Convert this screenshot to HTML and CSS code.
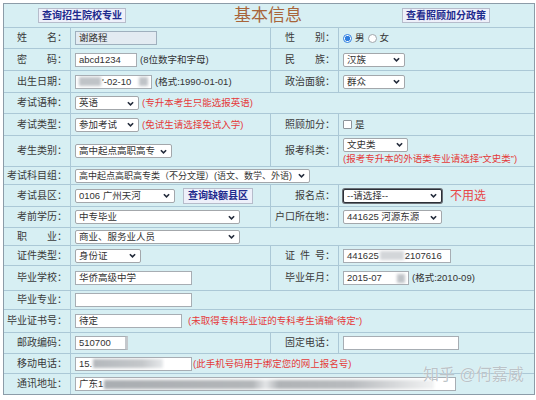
FILE: index.html
```html
<!DOCTYPE html>
<html lang="zh-CN">
<head>
<meta charset="utf-8">
<title>基本信息</title>
<link rel="stylesheet" href="styles.css">
</head>
<body>
<div class="page">
  <div class="form">
    <div class="head">
      <span class="btn">查询招生院校专业</span>
      <span class="title">基本信息</span>
      <span class="btn">查看照顾加分政策</span>
    </div>

    <div class="lab">姓　　名：</div>
    <div class="val"><span class="field ro w82">谢路程</span></div>
    <div class="lab">性　　别：</div>
    <div class="val"><span class="radio on"></span><span>男</span><span class="radio"></span><span>女</span></div>

    <div class="lab">密　　码：</div>
    <div class="val"><span class="field w62">abcd1234</span><span>(8位数字和字母)</span></div>
    <div class="lab">民　　族：</div>
    <div class="val"><span class="sel w62"><span class="t">汉族</span><svg class="chev" viewBox="0 0 8 5"><polyline points="1,1 4,4 7,1"/></svg></span></div>

    <div class="lab">出生日期：</div>
    <div class="val"><span class="field w77"><span class="blob b22"></span><span>'-02-10</span><span class="blob end b9"></span></span><span>(格式:1990-01-01)</span></div>
    <div class="lab">政治面貌：</div>
    <div class="val"><span class="sel w62"><span class="t">群众</span><svg class="chev" viewBox="0 0 8 5"><polyline points="1,1 4,4 7,1"/></svg></span></div>

    <div class="lab">考试语种：</div>
    <div class="val span3"><span class="sel w64"><span class="t">英语</span><svg class="chev" viewBox="0 0 8 5"><polyline points="1,1 4,4 7,1"/></svg></span><span class="red">(专升本考生只能选报英语)</span></div>

    <div class="lab">考试类型：</div>
    <div class="val"><span class="sel w64"><span class="t">参加考试</span><svg class="chev" viewBox="0 0 8 5"><polyline points="1,1 4,4 7,1"/></svg></span><span class="red">(免试生请选择免试入学)</span></div>
    <div class="lab">照顾加分：</div>
    <div class="val"><span class="check"></span><span>是</span></div>

    <div class="lab">考生类别：</div>
    <div class="val"><span class="sel w97"><span class="t">高中起点高职高专</span><svg class="chev" viewBox="0 0 8 5"><polyline points="1,1 4,4 7,1"/></svg></span></div>
    <div class="lab">报考科类：</div>
    <div class="val stack"><span class="sel w65"><span class="t">文史类</span><svg class="chev" viewBox="0 0 8 5"><polyline points="1,1 4,4 7,1"/></svg></span><span class="red">(报考专升本的外语类专业请选择“文史类”)</span></div>

    <div class="lab">考试科目组：</div>
    <div class="val span3"><span class="sel w235 tight"><span class="t">高中起点高职高专类（不分文理）(语文、数学、外语)</span><svg class="chev" viewBox="0 0 8 5"><polyline points="1,1 4,4 7,1"/></svg></span></div>

    <div class="lab">考试县区：</div>
    <div class="val gap8"><span class="sel w100"><span class="t">0106 广州天河</span><svg class="chev" viewBox="0 0 8 5"><polyline points="1,1 4,4 7,1"/></svg></span><span class="btn small">查询缺额县区</span></div>
    <div class="lab">报名点：</div>
    <div class="val gap8"><span class="sel focus w99"><span class="t">--请选择--</span><svg class="chev" viewBox="0 0 8 5"><polyline points="1,1 4,4 7,1"/></svg></span><span class="red big">不用选</span></div>

    <div class="lab">考前学历：</div>
    <div class="val"><span class="sel w165"><span class="t">中专毕业</span><svg class="chev" viewBox="0 0 8 5"><polyline points="1,1 4,4 7,1"/></svg></span></div>
    <div class="lab">户口所在地：</div>
    <div class="val"><span class="sel w99"><span class="t">441625 河源东源</span><svg class="chev" viewBox="0 0 8 5"><polyline points="1,1 4,4 7,1"/></svg></span></div>

    <div class="lab">职　　业：</div>
    <div class="val span3"><span class="sel w165"><span class="t">商业、服务业人员</span><svg class="chev" viewBox="0 0 8 5"><polyline points="1,1 4,4 7,1"/></svg></span></div>

    <div class="lab">证件类型：</div>
    <div class="val"><span class="sel w66"><span class="t">身份证</span><svg class="chev" viewBox="0 0 8 5"><polyline points="1,1 4,4 7,1"/></svg></span></div>
    <div class="lab">证&ensp;件&ensp;号：</div>
    <div class="val"><span class="field w108"><span>441625</span><span class="blob light b24"></span><span>2107616</span></span></div>

    <div class="lab">毕业学校：</div>
    <div class="val"><span class="field w117">华侨高级中学</span></div>
    <div class="lab">毕业年月：</div>
    <div class="val"><span class="field w66"><span>2015-07</span><span class="blob end b8"></span></span><span>(格式:2010-09)</span></div>

    <div class="lab">毕业专业：</div>
    <div class="val span3"><span class="field w117"></span></div>

    <div class="lab">毕业证书号：</div>
    <div class="val span3 gap6"><span class="field w107">待定</span><span class="red">(未取得专科毕业证的专科考生请输“待定”)</span></div>

    <div class="lab">邮政编码：</div>
    <div class="val"><span class="field w53 shade">510700</span></div>
    <div class="lab">固定电话：</div>
    <div class="val"><span class="field w116"></span></div>

    <div class="lab">移动电话：</div>
    <div class="val span3 gap1"><span class="field w117"><span>15.</span><span class="blob b66"></span></span><span class="red">(此手机号码用于绑定您的网上报名号)</span></div>

    <div class="lab">通讯地址：</div>
    <div class="val span3"><span class="field w381"><span>广东1</span><span class="blob addr"></span></span></div>
  </div>
  <div class="mark">知乎 @何嘉威</div>
</div>
</body>
</html>
```

FILE: styles.css
```css
* { box-sizing: border-box; margin: 0; padding: 0; }

body {
  background: #ffffff;
  font-family: "Liberation Sans", "Noto Sans CJK SC", sans-serif;
  font-size: 9.5px;
  line-height: 12px;
  color: #333333;
}

.page {
  position: relative;
  padding: 3px;
}

.form {
  display: grid;
  grid-template-columns: 66px 199px 67px 195px;
  grid-template-rows: 23px 20px 21px 21px 20px 21px 30px 17px 21px 20px 17px 19px 24px 18px 22px 20px 19px 20px;
  gap: 1px;
  width: 532px;
  background: #abc8d6;
  border: 1px solid #8c9ca8;
}

.form > div {
  background: #d7eff3;
  display: flex;
  align-items: center;
  white-space: nowrap;
  overflow: hidden;
}

.head {
  grid-column: 1 / -1;
  justify-content: space-between;
  padding: 0 44px 0 34px;
}

.title {
  font-size: 17px;
  line-height: 20px;
  color: #a8653a;
  margin-left: 8px;
}

.btn {
  display: inline-flex;
  align-items: center;
  height: 15px;
  padding: 0 3px;
  background: #eef0fa;
  border: 1px solid #b6bccb;
  color: #1f2b8e;
  font-weight: bold;
  font-size: 10px;
}

.btn.small {
  height: 16px;
  padding: 0 4px;
}

.lab {
  justify-content: flex-end;
  padding-right: 3px;
  color: #3a3a3a;
  font-size: 10px;
}

.val {
  padding-left: 4px;
  gap: 3px;
}

.span3 { grid-column: 2 / -1; }

.stack {
  flex-direction: column;
  align-items: flex-start !important;
  justify-content: center;
  gap: 1px;
}

.gap8 { gap: 8px; }
.gap6 { gap: 6px; }
.gap1 { gap: 1px; }

.field {
  display: inline-flex;
  align-items: center;
  height: 14px;
  padding: 0 3px;
  background: #ffffff;
  border: 1px solid #a7adb3;
  color: #333333;
  overflow: hidden;
  flex: none;
}

.field.ro { background: #e3ebf2; border-color: #9fb0be; }
.field.shade { border-right: 3px solid #c4c8cc; }

.sel {
  display: inline-flex;
  align-items: center;
  justify-content: space-between;
  height: 14px;
  padding: 0 4px 0 3px;
  background: #ffffff;
  border: 1px solid #a3a7ab;
  border-radius: 2px;
  flex: none;
}

.sel.tight { font-size: 9px; }

.sel.focus { border: 1px solid #2b2f36; box-shadow: 0 0 0 1px #6a6f76; }

.sel .t { overflow: hidden; }

.chev {
  width: 7px;
  height: 5px;
  flex: none;
  fill: none;
  stroke: #222a3a;
  stroke-width: 1.8;
}

.w53 { width: 53px; }
.w62 { width: 62px; }
.w64 { width: 64px; }
.w65 { width: 65px; }
.w66 { width: 66px; }
.w77 { width: 77px; }
.w82 { width: 82px; }
.w97 { width: 97px; }
.w99 { width: 99px; }
.w100 { width: 100px; }
.w107 { width: 107px; }
.w108 { width: 108px; }
.w116 { width: 116px; }
.w117 { width: 117px; }
.w165 { width: 165px; }
.w235 { width: 235px; }
.w381 { width: 381px; }

.blob {
  display: inline-block;
  height: 9px;
  background: #bfc3c7;
  filter: blur(1.5px);
  flex: none;
}

.blob.light { background: #d3d6d9; }
.blob.end { margin-left: auto; }
.b8 { width: 8px; }
.b9 { width: 9px; }
.b22 { width: 22px; margin-right: 1px; }
.b24 { width: 24px; margin: 0 1px; }
.b66 { width: 70px; margin-left: 1px; background: linear-gradient(90deg, #b4b8bc 0%, #c4c7ca 70%, #e6e8ea 100%); }
.addr {
  width: 330px;
  margin-left: 1px;
  background: linear-gradient(90deg, #a9adb1 0%, #b3b6b9 45%, #e3e5e7 49%, #b0b3b6 53%, #b8bbbe 75%, #f2f3f4 100%);
}

.radio {
  display: inline-block;
  width: 9px;
  height: 9px;
  border-radius: 50%;
  border: 1px solid #a0a6ac;
  background: #ffffff;
  flex: none;
}

.radio.on {
  border-color: #2f7fe0;
  background: radial-gradient(circle, #2f7fe0 0 2.5px, #ffffff 3px);
}

.check {
  display: inline-block;
  width: 9px;
  height: 9px;
  border: 1px solid #8d949a;
  border-radius: 1px;
  background: #ffffff;
  flex: none;
}

.red { color: #e53a3a; }
.red.big { font-size: 12px; color: #e84848; }

.mark {
  position: absolute;
  left: 423px;
  top: 366px;
  font-size: 16px;
  line-height: 18px;
  color: rgba(160, 170, 176, 0.7);
  text-shadow: 0 0 1px #ffffff;
  white-space: nowrap;
}
```
